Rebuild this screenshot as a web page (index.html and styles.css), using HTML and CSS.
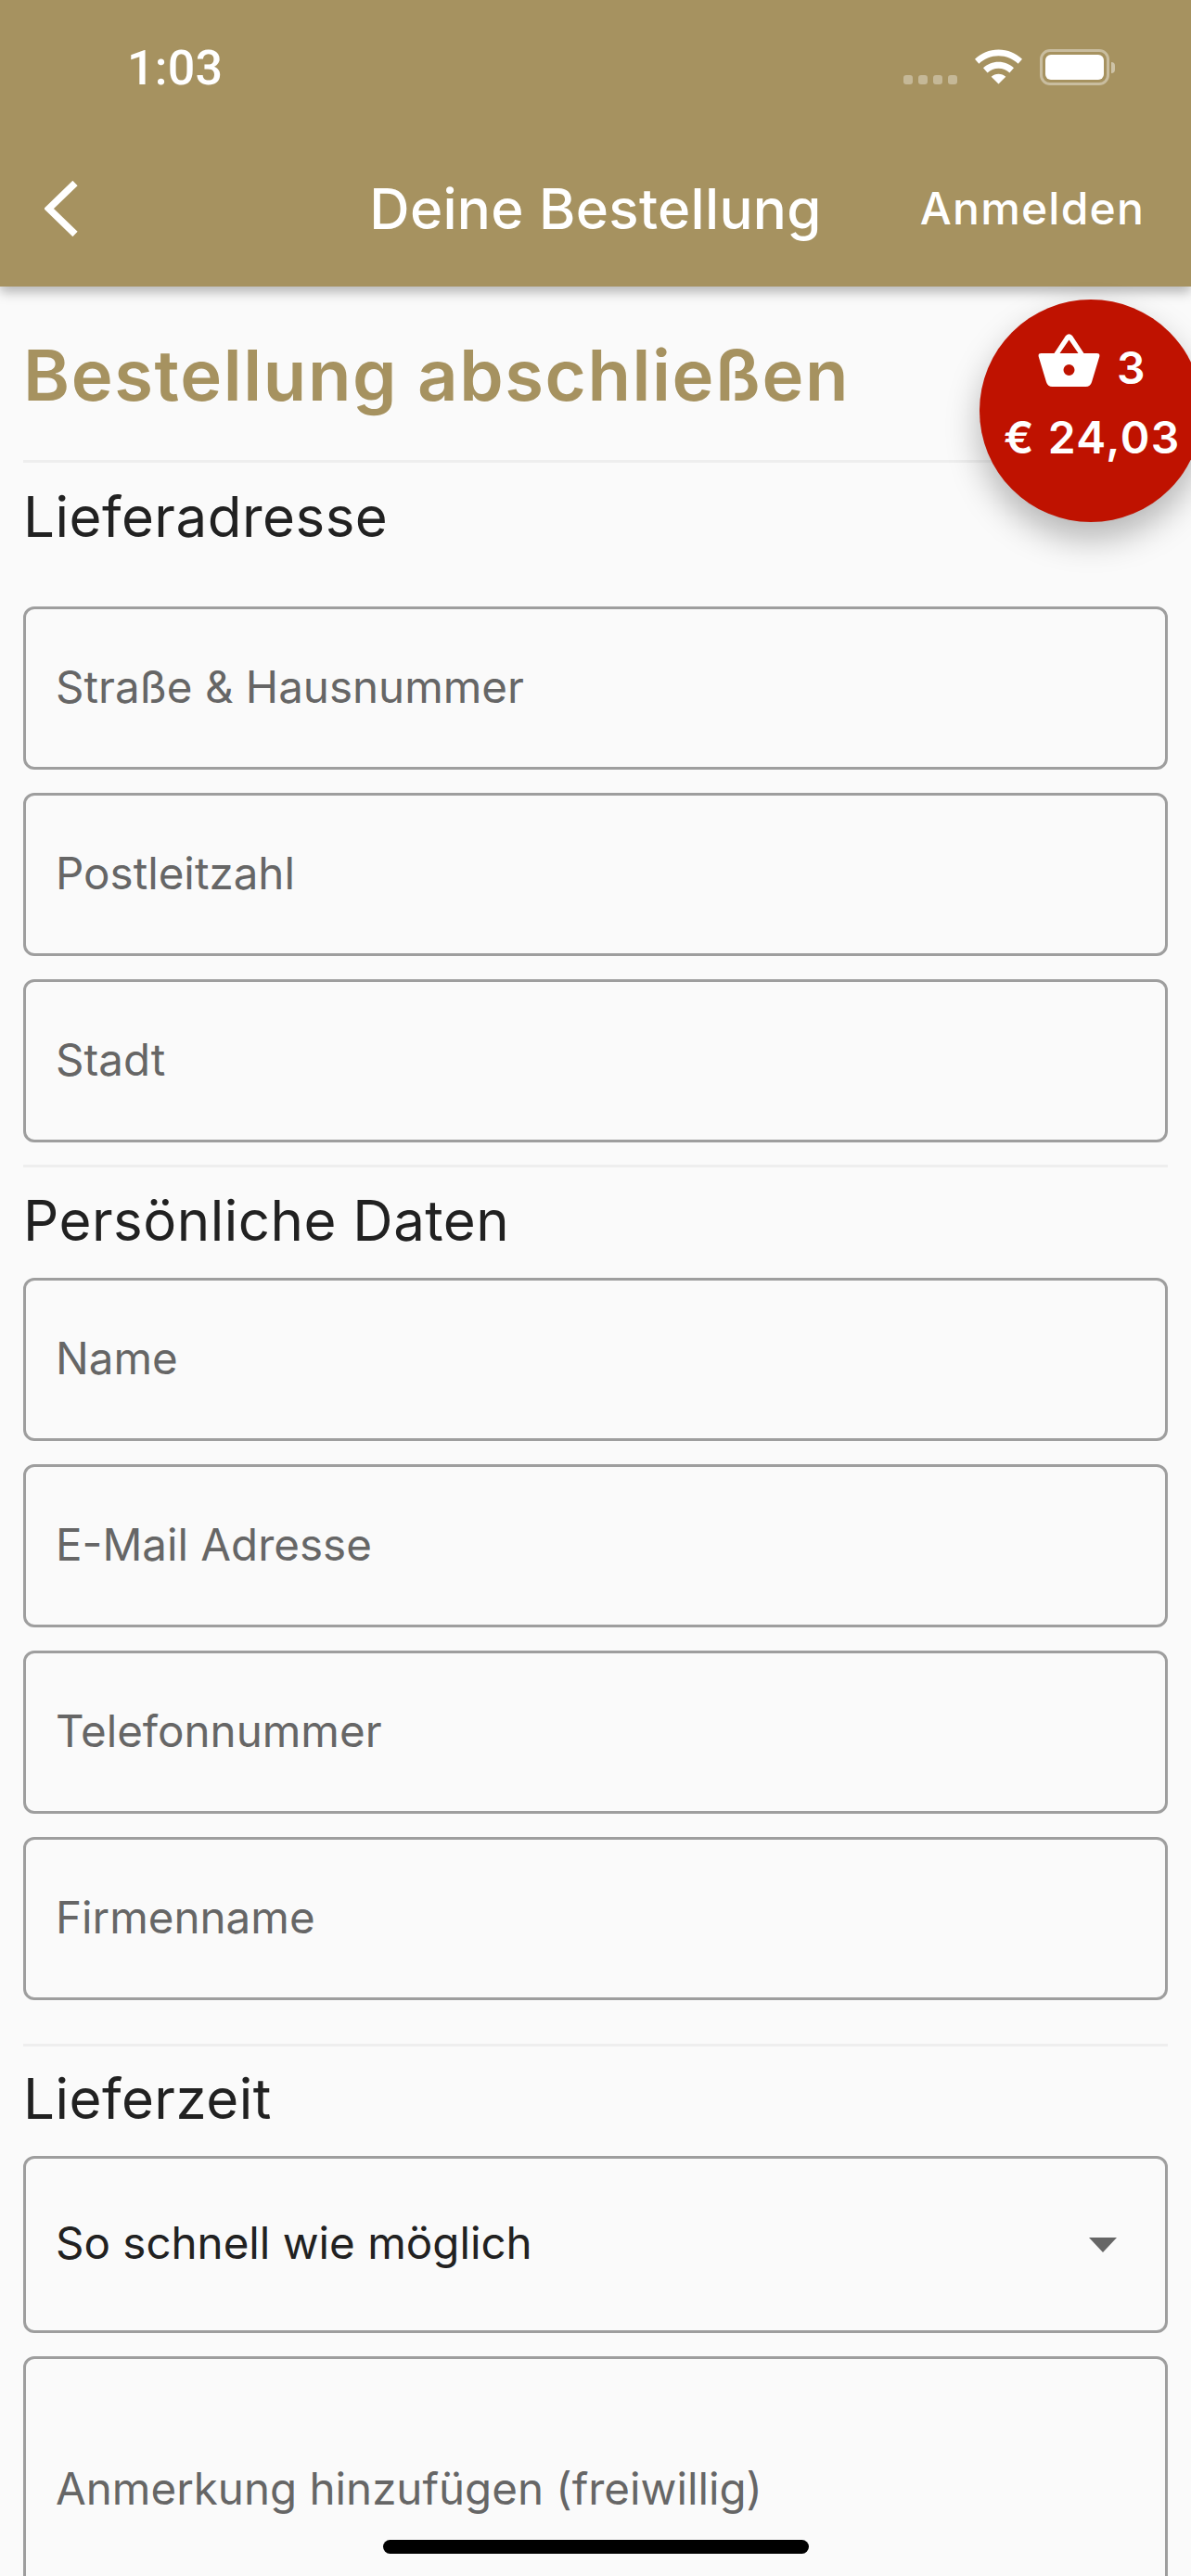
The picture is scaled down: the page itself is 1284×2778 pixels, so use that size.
FILE: index.html
```html
<!DOCTYPE html>
<html lang="de">
<head>
<meta charset="utf-8">
<title>Deine Bestellung</title>
<link rel="stylesheet" href="styles.css">
</head>
<body>
<div class="screen">
  <header class="appbar">
    <div class="status">
      <span class="time">1:03</span>
      <div class="status-icons">
        <div class="signal"><i></i><i></i><i></i><i></i></div>
        <svg class="wifi" width="51" height="38" viewBox="0 0 51 37"><path fill="#fff" d="M25.5 0C15.5 0 6.8 3.900 0 10.300l4.400 5C10 10 17.400 6.800 25.500 6.800S41 10 46.600 15.300l4.400-5C44.200 3.900 35.500 0 25.500 0zM25.500 13.300c-6.400 0-12.100 2.500-16.500 6.500l4.600 5.100c3.100-2.800 7.300-4.600 11.900-4.600s8.800 1.800 11.900 4.600l4.600-5.100c-4.400-4-10.100-6.500-16.500-6.500zM25.500 26.300c-3 0-5.700 1.100-7.800 3l7.800 7.700 7.800-7.700c-2.100-1.900-4.800-3-7.800-3z"/></svg>
        <div class="battery"><div class="battery-body"><div class="battery-fill"></div></div><div class="battery-cap"></div></div>
      </div>
    </div>
    <div class="nav">
      <svg class="back" width="36" height="60" viewBox="0 0 36 60"><path fill="none" stroke="#fff" stroke-width="7.500" d="M33 2.500 L4.500 30 L33 57.500"/></svg>
      <div class="nav-title">Deine Bestellung</div>
      <div class="nav-action">Anmelden</div>
    </div>
  </header>

  <main class="content">
    <h1 class="page-title">Bestellung abschließen</h1>
    <section class="group first">
      <h2 class="group-title">Lieferadresse</h2>
      <div class="fields">
        <div class="field">Straße &amp; Hausnummer</div>
        <div class="field">Postleitzahl</div>
        <div class="field">Stadt</div>
      </div>
    </section>
    <section class="group personal">
      <h2 class="group-title">Persönliche Daten</h2>
      <div class="fields">
        <div class="field">Name</div>
        <div class="field">E-Mail Adresse</div>
        <div class="field">Telefonnummer</div>
        <div class="field">Firmenname</div>
      </div>
    </section>
    <section class="group delivery">
      <h2 class="group-title">Lieferzeit</h2>
      <div class="fields">
        <div class="field select"><span>So schnell wie möglich</span><span class="caret"></span></div>
        <div class="field note">Anmerkung hinzufügen (freiwillig)</div>
      </div>
    </section>
  </main>

  <div class="cart">
    <div class="cart-top">
      <svg width="67" height="57" viewBox="0 0 66 57"><path fill="#fff" fill-rule="evenodd" d="M3 21H17L29.500 2Q33 -1.500 36.500 2L49 21H63Q66.500 21 65.800 24.500L57.500 52Q56 57 51 57H15Q10 57 8.500 52L.2 24.500Q-.5 21 3 21ZM23 21H43L33 6.500ZM33 33a6 6 0 1 0 0 12a6 6 0 1 0 0-12Z"/></svg>
      <span>3</span>
    </div>
    <div class="cart-price">€ 24,03</div>
  </div>

  <div class="home-bar"></div>
</div>
</body>
</html>
```
FILE: styles.css
```css
* { box-sizing: border-box; }
html, body { margin: 0; padding: 0; }
body { background: #fafafa; font-family: Inter, "Liberation Sans", sans-serif; }
.screen { position: relative; width: 1284px; height: 2778px; overflow: hidden; background: #fafafa; }

.appbar { height: 309px; background: #a69260; color: #fff; box-shadow: 0 6px 12px rgba(0,0,0,.28); position: relative; z-index: 2; }
.status { height: 145px; display: flex; justify-content: space-between; padding: 47px 82px 0 137px; }
.time { font-size: 52px; line-height: 54px; font-weight: 500; font-family: Roboto, sans-serif; letter-spacing: .2px; }
.status-icons { display: flex; align-items: flex-start; padding-top: 7px; }
.signal { display: flex; gap: 6px; margin: 27px 19px 0 0; }
.signal i { width: 10px; height: 10px; border-radius: 3px; background: rgba(255,255,255,.35); }
.wifi { margin-right: 19px; margin-top: -1px; }
.battery { display: flex; align-items: center; height: 39px; margin-top: -1px; }
.battery-body { width: 75px; height: 39px; border: 3px solid rgba(255,255,255,.4); border-radius: 11px; padding: 3px; }
.battery-fill { width: 100%; height: 100%; background: #fff; border-radius: 6px; }
.battery-cap { width: 4px; height: 12px; background: rgba(255,255,255,.45); border-radius: 0 4px 4px 0; margin-left: 2px; }
.nav { position: relative; height: 164px; display: flex; align-items: center; justify-content: center; padding-bottom: 5px; }
.back { position: absolute; left: 48px; top: 50px; }
.nav-title { font-size: 60px; line-height: 72px; font-weight: 500; letter-spacing: .3px; }
.nav-action { position: absolute; right: 50px; top: 51px; font-size: 48px; font-weight: 500; line-height: 58px; letter-spacing: 1.200px; }

.content { padding: 0 25px; }
.page-title { margin: 0; padding-top: 52px; height: 190px; border-bottom: 3px solid #eee; font-size: 76px; line-height: 87px; font-weight: 600; color: #a69260; letter-spacing: 1.600px; white-space: nowrap; }
.group-title { margin: 0; font-size: 60px; line-height: 70px; font-weight: 400; color: #212121; letter-spacing: .5px; }
.first { padding-top: 23px; }
.first .group-title { margin-bottom: 62px; }
.personal { margin-top: 24px; padding-top: 22px; border-top: 3px solid #eee; }
.personal .group-title { margin-bottom: 27px; }
.delivery { margin-top: 47px; padding-top: 21px; border-top: 3px solid #eee; }
.delivery .group-title { margin-bottom: 27px; }
.fields { display: flex; flex-direction: column; gap: 25px; }
.field { height: 176px; border: 3px solid #9e9e9e; border-radius: 12px; display: flex; align-items: center; padding: 0 32px 4px; font-size: 47.500px; color: #666; }
.select { height: 191px; color: #212121; justify-content: space-between; padding-right: 52px; }
.caret { width: 0; height: 0; border-left: 15.500px solid transparent; border-right: 15.500px solid transparent; border-top: 16px solid #666; margin-top: 4px; }
.note { height: 400px; align-items: flex-start; padding-top: 111px; }

.cart { position: absolute; z-index: 3; left: 1056px; top: 323px; width: 240px; height: 240px; border-radius: 50%; background: #bf1200; color: #fff; box-shadow: 0 18px 36px rgba(0,0,0,.28); font-weight: 600; font-size: 48px; line-height: 58px; letter-spacing: 1.500px; }
.cart-top { display: flex; align-items: flex-end; gap: 18px; padding: 37px 0 0 63px; height: 94px; }
.cart-top span { line-height: 48px; margin-bottom: -4px; }
.cart-price { padding: 26px 0 0 26px; white-space: nowrap; }
.home-bar { position: absolute; z-index: 4; left: 413px; top: 2739px; width: 459px; height: 15px; border-radius: 8px; background: #000; }
```
